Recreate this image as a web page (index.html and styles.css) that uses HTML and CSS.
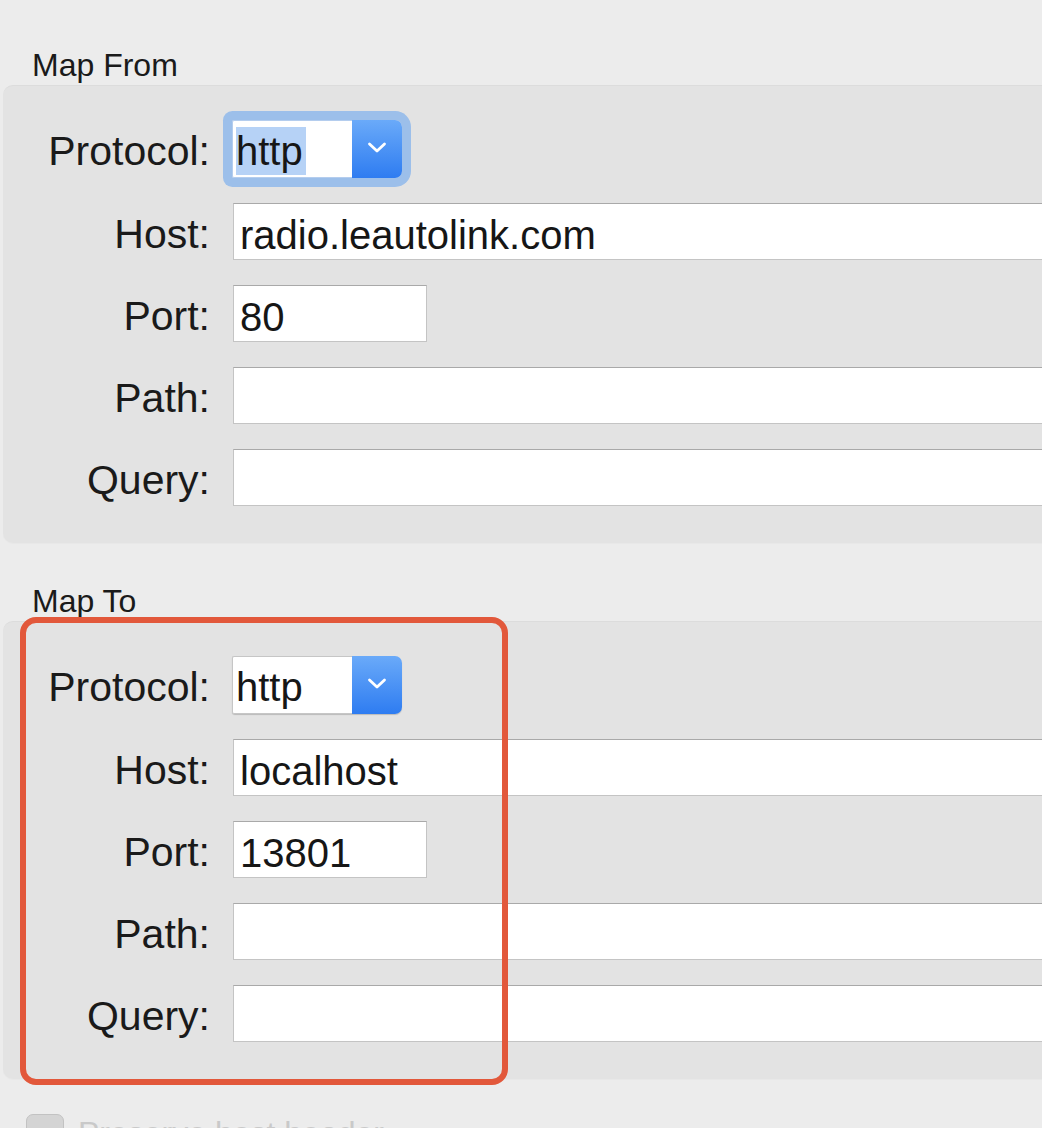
FILE: index.html
```html
<!DOCTYPE html>
<html>
<head>
<meta charset="utf-8">
<link rel="stylesheet" href="styles.css">
</head>
<body>
<div class="page">
  <div class="title first">Map From</div>
  <div class="group">
    <div class="row">
      <div class="label">Protocol:</div>
      <div class="popup focused">
        <div class="popup-value"><span class="sel">http</span></div>
        <div class="popup-btn"><svg width="22" height="13" viewBox="0 0 22 13"><path d="M3.5 3 L11 10 L18.5 3" fill="none" stroke="#fff" stroke-width="2.8" stroke-linecap="round" stroke-linejoin="round"/></svg></div>
      </div>
    </div>
    <div class="row">
      <div class="label">Host:</div>
      <div class="field wide">radio.leautolink.com</div>
    </div>
    <div class="row">
      <div class="label">Port:</div>
      <div class="field short">80</div>
    </div>
    <div class="row">
      <div class="label">Path:</div>
      <div class="field wide"></div>
    </div>
    <div class="row">
      <div class="label">Query:</div>
      <div class="field wide"></div>
    </div>
  </div>

  <div class="title second">Map To</div>
  <div class="group highlighted">
    <div class="row">
      <div class="label">Protocol:</div>
      <div class="popup">
        <div class="popup-value">http</div>
        <div class="popup-btn"><svg width="22" height="13" viewBox="0 0 22 13"><path d="M3.5 3 L11 10 L18.5 3" fill="none" stroke="#fff" stroke-width="2.8" stroke-linecap="round" stroke-linejoin="round"/></svg></div>
      </div>
    </div>
    <div class="row">
      <div class="label">Host:</div>
      <div class="field wide">localhost</div>
    </div>
    <div class="row">
      <div class="label">Port:</div>
      <div class="field short">13801</div>
    </div>
    <div class="row">
      <div class="label">Path:</div>
      <div class="field wide"></div>
    </div>
    <div class="row">
      <div class="label">Query:</div>
      <div class="field wide"></div>
    </div>
    <div class="redbox"></div>
  </div>

  <div class="check-row">
    <span class="checkbox"></span>
    <span class="check-label">Preserve host header</span>
  </div>
</div>
</body>
</html>
```

FILE: styles.css
```css
html, body {
  margin: 0;
  padding: 0;
  background: #ececec;
  overflow: hidden;
}
body {
  font-family: "Liberation Sans", Arial, sans-serif;
  color: #1b1b1b;
  width: 1042px;
  height: 1128px;
}
.page {
  display: flex;
  flex-direction: column;
  width: 1042px;
}
.title {
  font-size: 32px;
  line-height: 40px;
  height: 40px;
  padding-left: 32px;
  color: #1a1a1a;
}
.title.first {
  margin-top: 45px;
}
.title.second {
  margin-top: 38px;
}
.group {
  position: relative;
  margin-left: 3px;
  width: 1080px;
  background: #e3e3e3;
  border-radius: 10px;
  border-top: 1px solid #dcdcdc;
  padding: 34px 0 37px 0;
  display: flex;
  flex-direction: column;
  gap: 25px;
  box-shadow: 0 1px 0 #e8e8e8;
}
.row {
  display: flex;
  align-items: flex-start;
  gap: 22px;
  height: 57px;
}
.row:first-child {
  height: 58px;
}
.label {
  width: 207px;
  text-align: right;
  font-size: 41px;
  height: 57px;
  box-sizing: border-box;
  padding-top: 5px;
  line-height: 52px;
  color: #1a1a1a;
  flex: none;
}
.field {
  box-sizing: border-box;
  height: 57px;
  background: #fff;
  border: 1px solid #c4c4c4;
  border-top-color: #a9a9a9;
  font-size: 40px;
  line-height: 52px;
  padding-top: 5px;
  padding-left: 6px;
  color: #161616;
  margin-left: 1px;
  white-space: nowrap;
  overflow: hidden;
}
.field.wide {
  width: 900px;
}
.field.short {
  width: 194px;
}
.popup {
  display: flex;
  height: 58px;
  width: 170px;
  box-sizing: border-box;
  border-radius: 3px 7px 7px 3px;
  box-shadow: 0 1px 1px rgba(0,0,0,0.18);
}
.popup.focused {
  box-shadow: 0 0 0 9px #9cbfea;
  border-radius: 3px 7px 7px 3px;
}
.popup-value {
  flex: none;
  width: 120px;
  box-sizing: border-box;
  background: #fff;
  border: 1px solid #c6c6c6;
  border-right: none;
  font-size: 40px;
  line-height: 53px;
  padding-top: 4px;
  padding-left: 3px;
  color: #161616;
  border-radius: 2px 0 0 2px;
}
.popup.focused .popup-value {
  border-color: #b4cdee;
}
.sel {
  background: #b6d2f6;
  display: inline-block;
  line-height: 48px;
  padding-right: 3px;
}
.popup-btn {
  flex: 1;
  display: flex;
  align-items: center;
  justify-content: center;
  background: linear-gradient(#6aaaf9, #2e7cf1);
  border-radius: 0 7px 7px 0;
}
.popup-btn svg {
  margin-top: -3px;
}
.redbox {
  position: absolute;
  left: 17px;
  top: -5px;
  width: 488px;
  height: 468px;
  box-sizing: border-box;
  border: 6px solid #e2583b;
  border-radius: 16px;
  pointer-events: none;
}
.check-row {
  display: flex;
  align-items: center;
  gap: 14px;
  margin-top: 34px;
  padding-left: 26px;
  height: 40px;
}
.checkbox {
  width: 38px;
  height: 38px;
  border-radius: 7px;
  background: #d4d4d4;
  border: 1px solid #c2c2c2;
  box-sizing: border-box;
}
.check-label {
  font-size: 32px;
  color: #c9c9c9;
}
```
